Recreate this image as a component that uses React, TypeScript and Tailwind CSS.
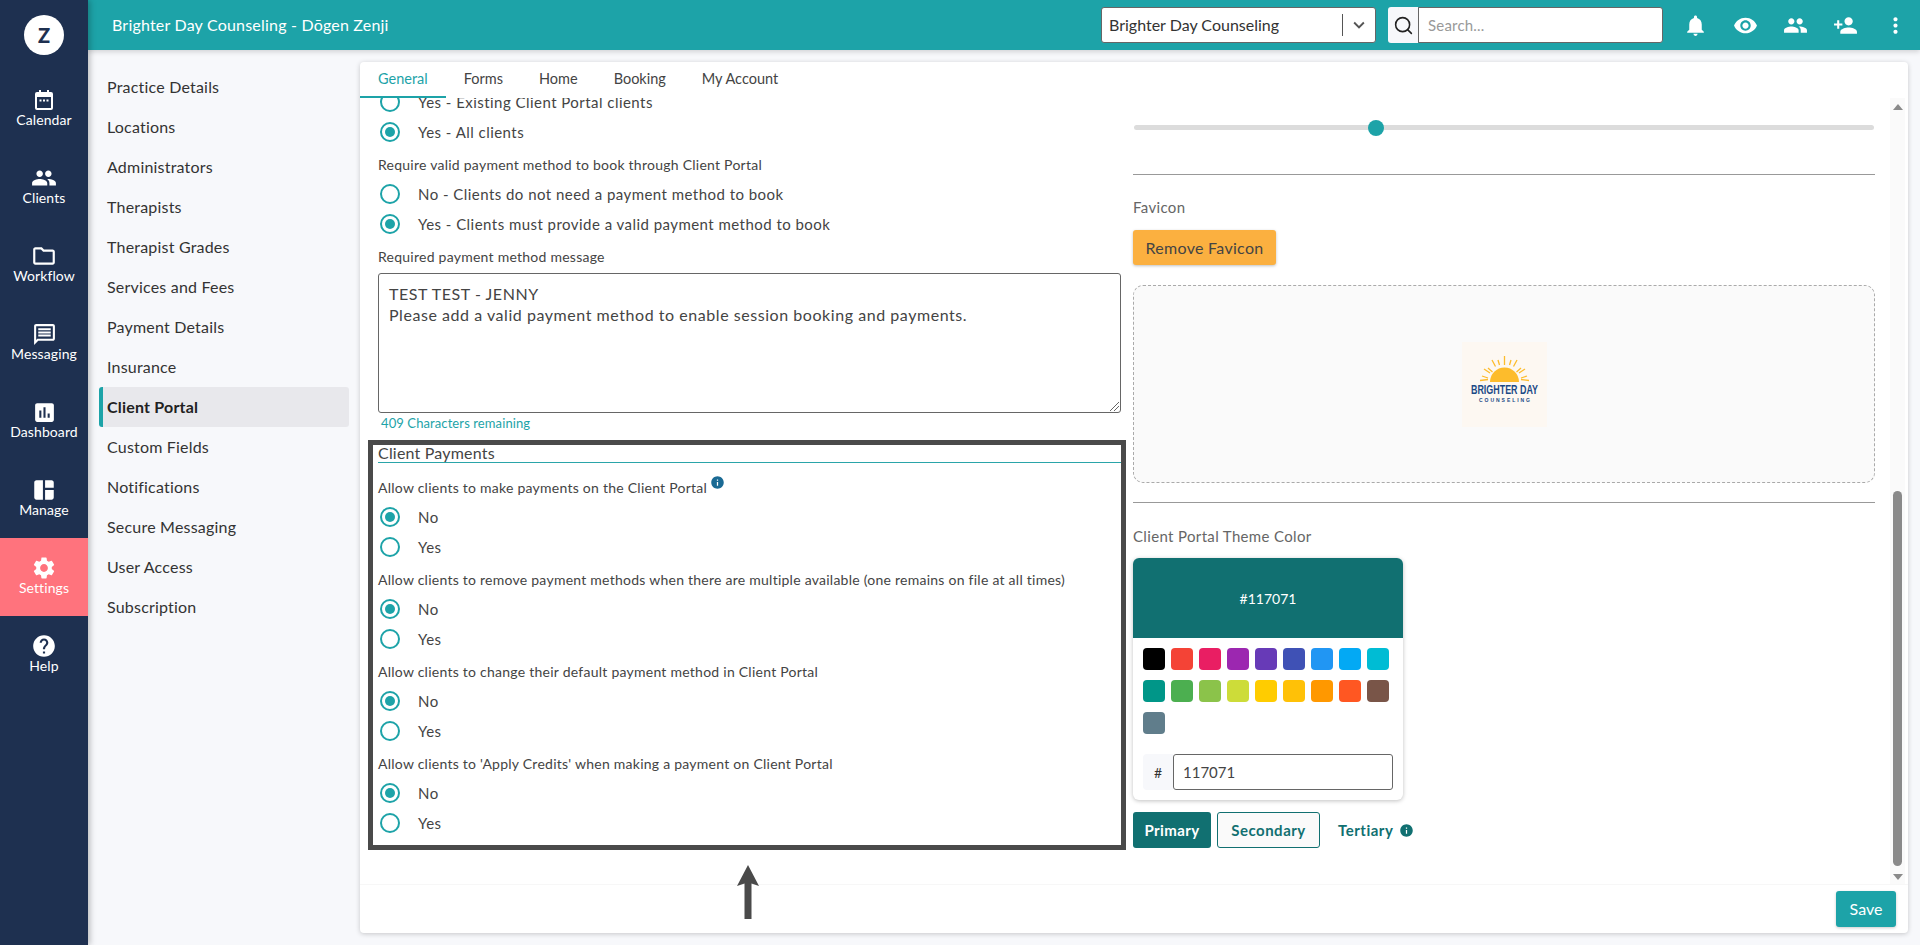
import type { ReactNode } from 'react';
import { Search } from 'lucide-react';
import {
  MdAssessment,
  MdExpandMore,
  MdHelp,
  MdInfo,
  MdMoreVert,
  MdNotifications,
  MdOutlineFolder,
  MdOutlineMessage,
  MdPeople,
  MdPersonAdd,
  MdSettings,
  MdSpaceDashboard,
  MdVisibility,
} from 'react-icons/md';

function CalendarIcon() {
  return (
    <svg viewBox="0 0 24 24" className="w-[24px] h-[24px]" fill="white">
      <path d="M7 2h2v3H7zM15 2h2v3h-2z" />
      <path d="M5 4h14a2 2 0 0 1 2 2v14a2 2 0 0 1-2 2H5a2 2 0 0 1-2-2V6a2 2 0 0 1 2-2zm0 5v11h14V9z" fillRule="evenodd" />
      <path d="M7.5 11.500h2v2h-2zM11 11.500h2v2h-2zM14.500 11.500h2v2h-2z" />
    </svg>
  );
}

const navItems = [
  { label: 'Calendar', icon: <CalendarIcon /> },
  { label: 'Clients', icon: <MdPeople size={26} /> },
  { label: 'Workflow', icon: <MdOutlineFolder size={26} /> },
  { label: 'Messaging', icon: <MdOutlineMessage size={25} /> },
  { label: 'Dashboard', icon: <MdAssessment size={25} /> },
  { label: 'Manage', icon: <MdSpaceDashboard size={26} /> },
  { label: 'Settings', icon: <MdSettings size={26} />, active: true },
  { label: 'Help', icon: <MdHelp size={26} /> },
];

const settingsLinks = [
  'Practice Details',
  'Locations',
  'Administrators',
  'Therapists',
  'Therapist Grades',
  'Services and Fees',
  'Payment Details',
  'Insurance',
  'Client Portal',
  'Custom Fields',
  'Notifications',
  'Secure Messaging',
  'User Access',
  'Subscription',
];

const tabs = ['General', 'Forms', 'Home', 'Booking', 'My Account'];

const swatches = [
  'bg-[#000000]', 'bg-[#f44336]', 'bg-[#e91e63]', 'bg-[#9c27b0]', 'bg-[#673ab7]', 'bg-[#3f51b5]', 'bg-[#2196f3]', 'bg-[#03a9f4]', 'bg-[#00bcd4]',
  'bg-[#009688]', 'bg-[#4caf50]', 'bg-[#8bc34a]', 'bg-[#cddc39]', 'bg-[#ffcc00]', 'bg-[#ffc107]', 'bg-[#ff9800]', 'bg-[#ff5722]', 'bg-[#795548]',
  'bg-[#607d8b]',
];

const paymentGroups = [
  { label: 'Allow clients to make payments on the Client Portal', info: true },
  { label: 'Allow clients to remove payment methods when there are multiple available (one remains on file at all times)' },
  { label: 'Allow clients to change their default payment method in Client Portal' },
  { label: "Allow clients to 'Apply Credits' when making a payment on Client Portal" },
];

function Radio({ label, checked }: { label: string; checked?: boolean }) {
  return (
    <div className="flex items-center h-[30px] pl-[12px] text-[15px] tracking-[0.46px] text-[#444]">
      <span className="w-[20px] h-[20px] rounded-full border-2 border-[#1da3a8] flex items-center justify-center shrink-0">
        {checked && <span className="w-[10px] h-[10px] rounded-full bg-[#1da3a8]" />}
      </span>
      <span className="ml-[18px]">{label}</span>
    </div>
  );
}

function FieldLabel({ children }: { children: ReactNode }) {
  return <div className="flex items-center h-[32px] pt-[2px] pl-[10px] text-[14px] tracking-[0.25px] text-[#444]">{children}</div>;
}

function BrandLogo() {
  return (
    <svg viewBox="0 0 85 85" className="w-[85px] h-[85px]">
      <rect width="85" height="85" fill="#fdf8f2" />
      <path d="M28 40a14.500 14.500 0 0 1 29 0z" fill="#fdbc2c" />
      <g stroke="#fdbc2c" strokeWidth="1.300">
        <path d="M42.500 14v9M36 18l1.500 5M49 18l-1.500 5M30 18l3.500 6.500M55 18l-3.500 6.500M26 26l4.500 4M59 26l-4.500 4M22 27l6 4M63 27l-6 4M20 34l6 2M65 34l-6 2M18 38.500l8-1M67 38.500l-8-1" />
      </g>
      <text x="42.500" y="52" textAnchor="middle" textLength="67" lengthAdjust="spacingAndGlyphs" fontFamily="Liberation Sans" fontWeight="700" fontSize="12.500" fill="#1b4a86">
        BRIGHTER DAY
      </text>
      <text x="42.500" y="60" textAnchor="middle" textLength="51" fontFamily="Liberation Sans" fontWeight="700" fontSize="5" fill="#1b4a86">
        COUNSELING
      </text>
    </svg>
  );
}

export default function App() {
  return (
    <div className="flex h-screen overflow-hidden bg-[#f7f8fb] font-['Lato','Open_Sans',sans-serif] text-[#333]">
      {/* Main nav */}
      <aside className="w-[88px] shrink-0 bg-[#1e3050] shadow-[2px_0_6px_rgba(0,0,0,0.25)] z-20 flex flex-col">
        <div className="h-[70px] flex items-start justify-center pt-[15px]">
          <div className="w-[40px] h-[40px] rounded-full bg-white flex items-center justify-center text-[#1e3050] text-[20px] font-black">
            Z
          </div>
        </div>
        {navItems.map((item) => (
          <div
            key={item.label}
            className={
              item.active
                ? 'h-[78px] flex flex-col items-center pt-[17px] bg-[#ff737d] text-white'
                : 'h-[78px] flex flex-col items-center pt-[17px] text-white'
            }
          >
            <div className="h-[26px] flex items-center justify-center">{item.icon}</div>
            <span className="text-[14px] tracking-[0.1px] leading-[18px] -mt-[2px]">{item.label}</span>
          </div>
        ))}
      </aside>

      <div className="flex-1 min-w-0 flex flex-col">
        {/* Top bar */}
        <header className="h-[50px] shrink-0 bg-[#1da3a8] shadow-[0_2px_5px_rgba(0,0,0,0.15)] z-10 flex items-center text-white">
          <div className="ml-[24px] text-[16px] tracking-[0.2px]">Brighter Day Counseling - Dōgen Zenji</div>
          <div className="ml-auto w-[275px] h-[36px] bg-white rounded-[3px] border border-[#666] flex items-center text-[16px] text-[#333] pl-[7px]">
            <span className="flex-1">Brighter Day Counseling</span>
            <span className="w-px h-[22px] bg-[#555]" />
            <MdExpandMore size={22} className="text-[#555] mx-[5px]" />
          </div>
          <div className="ml-[12px] w-[30px] h-[36px] bg-[#f7f8fb] rounded-l-[3px] flex items-center justify-center">
            <Search size={21} strokeWidth={1.8} className="text-[#222]" />
          </div>
          <div className="w-[245px] h-[36px] bg-white rounded-r-[3px] border border-[#666] flex items-center pl-[9px] text-[15px] tracking-[0.2px] text-[#999]">
            Search...
          </div>
          <div className="ml-[20px] w-[25px] flex justify-center"><MdNotifications size={25} /></div>
          <div className="ml-[25px] w-[25px] flex justify-center"><MdVisibility size={25} /></div>
          <div className="ml-[25px] w-[25px] flex justify-center"><MdPeople size={25} /></div>
          <div className="ml-[25px] w-[25px] flex justify-center"><MdPersonAdd size={25} /></div>
          <div className="ml-[25px] w-[25px] flex justify-center"><MdMoreVert size={25} /></div>
          <div className="w-[12px]" />
        </header>

        <div className="flex-1 min-h-0 flex pl-[11px] pr-[12px] pt-[12px] pb-[12px]">
          {/* Settings links */}
          <nav className="w-[250px] shrink-0 pt-[5px]">
            {settingsLinks.map((link) =>
              link === 'Client Portal' ? (
                <div
                  key={link}
                  className="h-[40px] flex items-center pl-[4px] bg-[#e8e8ec] border-l-4 border-[#1da3a8] rounded-[3px] text-[16px] tracking-[0.2px] font-bold text-[#222]"
                >
                  {link}
                </div>
              ) : (
                <div key={link} className="h-[40px] flex items-center pl-[8px] text-[16px] tracking-[0.2px] text-[#333]">
                  {link}
                </div>
              )
            )}
          </nav>

          {/* Card */}
          <main className="relative ml-[11px] flex-1 min-w-0 bg-white rounded-[4px] shadow-[0_1px_5px_rgba(0,0,0,0.2)] flex flex-col overflow-hidden">
            <div className="h-[36px] shrink-0 flex">
              {tabs.map((tab, i) => (
                <div
                  key={tab}
                  className={
                    i === 0
                      ? 'px-[18px] flex items-center text-[14.500px] text-[#1da3a8] border-b-2 border-[#1da3a8]'
                      : 'px-[18px] flex items-center text-[14.500px] text-[#444] border-b-2 border-transparent'
                  }
                >
                  {tab}
                </div>
              ))}
            </div>

            <div className="flex-1 min-h-0 flex">
              <div className="flex-1 min-w-0 overflow-hidden flex pl-[8px]">
                {/* Left column */}
                <div className="w-[758px] shrink-0 -mt-[11px]">
                  <Radio label="Yes - Existing Client Portal clients" />
                  <Radio label="Yes - All clients" checked />
                  <FieldLabel>Require valid payment method to book through Client Portal</FieldLabel>
                  <Radio label="No - Clients do not need a payment method to book" />
                  <Radio label="Yes - Clients must provide a valid payment method to book" checked />
                  <FieldLabel>Required payment method message</FieldLabel>
                  <div className="relative mt-[2px] ml-[10px] w-[743px] h-[140px] border border-[#666] rounded-[3px] px-[10px] py-[9px] text-[16px] tracking-[0.55px] leading-[21px] text-[#444]">
                    TEST TEST - JENNY
                    <br />
                    Please add a valid payment method to enable session booking and payments.
                    <svg viewBox="0 0 10 10" className="absolute right-[1px] bottom-[1px] w-[10px] h-[10px]" stroke="#666" strokeWidth="1">
                      <path d="M1 10L10 1M5 10L10 5" />
                    </svg>
                  </div>
                  <div className="ml-[13px] h-[22px] flex items-center text-[13px] tracking-[0.1px] text-[#1da3a8]">409 Characters remaining</div>
                  <div className="mt-[5px] border-[5px] border-[#4a4a4a] h-[410px] pl-[5px]">
                    <div className="h-[18px] flex items-end border-b border-[#2aa5a9] text-[16px] tracking-[0.2px] leading-[18px] text-[#444]">
                      Client Payments
                    </div>
                    <div className="-ml-[10px] mt-[7px]">
                      {paymentGroups.map((group) => (
                        <div key={group.label}>
                          <FieldLabel>
                            {group.label}
                            {group.info && <MdInfo size={15} className="ml-[3px] -mt-[9px] text-[#1a6a94]" />}
                          </FieldLabel>
                          <Radio label="No" checked />
                          <Radio label="Yes" />
                        </div>
                      ))}
                    </div>
                  </div>
                </div>

                {/* Right column */}
                <div className="ml-[7px] w-[742px] shrink-0">
                  <div className="relative mt-[27px] mx-[1px] h-[5px] bg-[#dcdcdc] rounded-full">
                    <div className="absolute left-[234px] -top-[5px] w-[16px] h-[16px] rounded-full bg-[#1da3a8]" />
                  </div>
                  <div className="mt-[44px] border-t border-[#999]" />
                  <div className="mt-[23px] h-[18px] flex items-center text-[15px] tracking-[0.35px] text-[#666]">Favicon</div>
                  <div className="mt-[14px] w-[143px] h-[35px] rounded-[3px] bg-[#fbb040] shadow-[0_1px_3px_rgba(0,0,0,0.25)] flex items-center justify-center text-[16px] tracking-[0.3px] text-[#444]">
                    Remove Favicon
                  </div>
                  <div className="mt-[20px] h-[198px] rounded-[10px] border border-dashed border-[#aaa] bg-[#fafafa] flex items-center justify-center">
                    <BrandLogo />
                  </div>
                  <div className="mt-[19px] border-t border-[#999]" />
                  <div className="mt-[24px] h-[18px] flex items-center text-[15px] tracking-[0.35px] text-[#666]">Client Portal Theme Color</div>
                  <div className="mt-[13px] w-[270px] h-[242px] rounded-[6px] bg-white shadow-[0_1px_4px_rgba(0,0,0,0.25)] overflow-hidden">
                    <div className="h-[80px] bg-[#117071] flex items-center justify-center text-white text-[14px]">#117071</div>
                    <div className="pt-[10px] pl-[10px] h-[116px] grid grid-cols-[repeat(9,22px)] auto-rows-[22px] gap-x-[6px] gap-y-[10px]">
                      {swatches.map((s) => (
                        <div key={s} className={`${s} rounded-[4px]`} />
                      ))}
                    </div>
                    <div className="ml-[10px] flex h-[36px]">
                      <div className="w-[30px] bg-[#f7f8fb] rounded-l-[4px] flex items-center justify-center text-[14px] text-[#333]">#</div>
                      <div className="w-[220px] border border-[#666] rounded-[3px] flex items-center pl-[9px] text-[15px] text-[#444]">117071</div>
                    </div>
                  </div>
                  <div className="mt-[12px] flex items-center h-[36px]">
                    <div className="w-[78px] h-[36px] rounded-[3px] bg-[#117071] text-white font-bold text-[15px] tracking-[0.4px] flex items-center justify-center">Primary</div>
                    <div className="ml-[6px] w-[103px] h-[36px] rounded-[3px] border border-[#117071] bg-[#fafafa] text-[#117071] font-bold text-[15px] tracking-[0.5px] flex items-center justify-center">Secondary</div>
                    <div className="ml-[18px] text-[#117071] font-bold text-[15px] tracking-[0.5px]">Tertiary</div>
                    <MdInfo size={15} className="ml-[6px] text-[#117071]" />
                  </div>
                </div>
              </div>

              {/* Scrollbar */}
              <div className="w-[15px] shrink-0 mr-[3px] bg-[#fafafa] flex flex-col items-center">
                <div className="mt-[6px] w-0 h-0 border-x-[5px] border-x-transparent border-b-[6px] border-b-[#8a8a8a]" />
                <div className="mt-auto w-[9px] h-[375px] rounded-full bg-[#8a8a8a]" />
                <div className="mt-[8px] mb-[4px] w-0 h-0 border-x-[5px] border-x-transparent border-t-[6px] border-t-[#8a8a8a]" />
              </div>
            </div>

            <div className="h-[49px] shrink-0 border-t border-[#f7f7f7] flex items-start justify-end pr-[12px] pt-[6px]">
              <div className="w-[60px] h-[36px] rounded-[3px] bg-[#1da3a8] shadow-[0_1px_3px_rgba(0,0,0,0.2)] text-white text-[16px] flex items-center justify-center">
                Save
              </div>
            </div>

            {/* Annotation arrow */}
            <svg viewBox="0 0 22 54" className="absolute left-[377px] top-[803px] w-[22px] h-[54px]" fill="#4a4a4a">
              <path d="M11 0L22 21L14.500 18.500V54H7.500V18.500L0 21Z" />
            </svg>
          </main>
        </div>
      </div>
    </div>
  );
}
